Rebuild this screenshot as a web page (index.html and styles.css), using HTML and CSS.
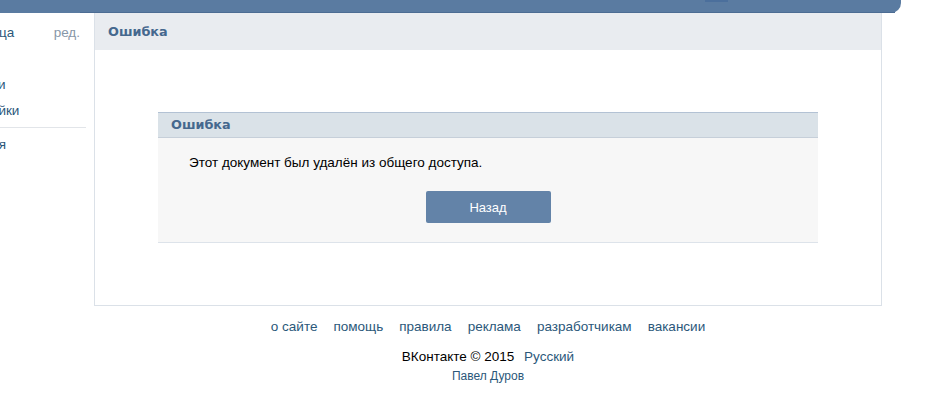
FILE: index.html
```html
<!DOCTYPE html>
<html lang="ru">
<head>
<meta charset="utf-8">
<title>Ошибка</title>
<link rel="stylesheet" href="styles.css">
</head>
<body>
<div class="topbar"><span class="topbar-tab"></span></div>
<div class="layout">
  <nav class="sidebar">
    <ul class="menu">
      <li class="menu-item"><a href="#">Моя Страница</a><a class="edit" href="#">ред.</a></li>
      <li class="menu-item"><a href="#">Мои Друзья</a></li>
      <li class="menu-item"><a href="#">Мои Новости</a></li>
      <li class="menu-item"><a href="#">Мои Настройки</a></li>
      <li class="menu-sep"></li>
      <li class="menu-item menu-item-apps"><a href="#">Приложения</a></li>
    </ul>
  </nav>
  <div class="main">
    <section class="panel">
      <header class="panel-head">Ошибка</header>
      <div class="panel-body">
        <div class="msg-box">
          <div class="msg-head">Ошибка</div>
          <div class="msg-body">
            <p class="msg-text">Этот документ был удалён из общего доступа.</p>
            <div class="msg-actions"><button class="btn" type="button">Назад</button></div>
          </div>
        </div>
      </div>
    </section>
    <footer class="footer">
      <nav class="footer-links">
        <a href="#">о сайте</a>
        <a href="#">помощь</a>
        <a href="#">правила</a>
        <a href="#">реклама</a>
        <a href="#">разработчикам</a>
        <a href="#">вакансии</a>
      </nav>
      <div class="copy">ВКонтакте © 2015 <a href="#">Русский</a></div>
      <div class="author"><a href="#">Павел Дуров</a></div>
    </footer>
  </div>
</div>
</body>
</html>
```

FILE: styles.css
```css
html, body {
  margin: 0;
  padding: 0;
  background: #fff;
  overflow: hidden;
}
body {
  font-family: "Liberation Sans", Arial, sans-serif;
  font-size: 13.5px;
  color: #000;
}
a {
  color: #2b587a;
  text-decoration: none;
}

.topbar {
  position: relative;
  width: 901px;
  height: 13px;
  background: #5a7ba1;
  border-bottom-right-radius: 10px;
}
.topbar::after {
  content: "";
  position: absolute;
  left: 80px;
  right: 6px;
  bottom: 0;
  height: 1px;
  background: #4c6c93;
}
.topbar-tab {
  position: absolute;
  left: 705px;
  top: 0;
  width: 23px;
  height: 2px;
  background: #4b6f9c;
}

.layout {
  display: flex;
  align-items: flex-start;
}

.sidebar {
  width: 86px;
  flex: none;
  overflow: hidden;
}
.menu {
  list-style: none;
  margin: 7px 0 0 -77px;
  padding: 0;
  width: 163px;
}
.menu-item {
  display: flex;
  justify-content: space-between;
  height: 26px;
  line-height: 26px;
  padding-right: 6px;
  white-space: nowrap;
}
.menu-item-apps {
  padding-left: 4px;
}
.menu-item a {
  color: #2b587a;
}
.menu-item a.edit {
  color: #8797a8;
}
.menu-sep {
  height: 1px;
  background: #e2e5e9;
  margin: 3px 0 4px;
}

.main {
  margin-left: 8px;
  width: 788px;
  flex: none;
}

.panel {
  border: 1px solid #dbe1e8;
  border-top: 0;
}
.panel-head {
  height: 37px;
  line-height: 37px;
  padding-left: 13px;
  background: #e9ecf0;
  color: #45688e;
  font-family: "DejaVu Sans", sans-serif;
  font-weight: bold;
  font-size: 12.8px;
}
.panel-body {
  padding: 62px 63px 62px;
}

.msg-box {
  border-top: 1px solid #b3c2d4;
  border-bottom: 1px solid #dde3ea;
}
.msg-head {
  height: 24px;
  line-height: 24px;
  padding-left: 13px;
  background: #dae2e8;
  border-bottom: 1px solid #c6cfd9;
  color: #45688e;
  font-family: "DejaVu Sans", sans-serif;
  font-weight: bold;
  font-size: 12.8px;
}
.msg-body {
  background: #f7f7f7;
  padding: 17px 31px 19px;
}
.msg-text {
  margin: 0;
  line-height: 16px;
}
.msg-actions {
  display: flex;
  justify-content: center;
  margin-top: 20px;
  margin-right: -31px;
  margin-left: -31px;
}
.btn {
  width: 125px;
  height: 32px;
  border: 0;
  border-radius: 2px;
  background: #6383a8;
  color: #fff;
  font-family: "Liberation Sans", Arial, sans-serif;
  font-size: 13px;
  padding: 0;
}

.footer {
  text-align: center;
  padding-top: 13px;
}
.footer-links {
  display: flex;
  justify-content: center;
  gap: 16px;
  line-height: 16px;
}
.copy {
  margin-top: 14px;
  line-height: 16px;
  color: #000;
}
.copy a {
  margin-left: 6px;
}
.author {
  margin-top: 4px;
  font-size: 12px;
  line-height: 14px;
}
```
